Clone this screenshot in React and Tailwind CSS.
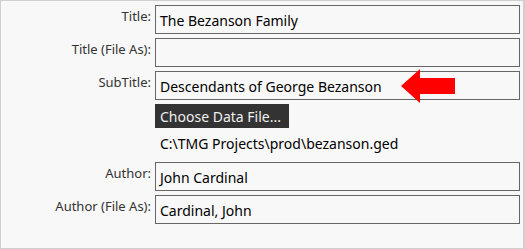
import React from "react";

const font = { fontFamily: '"Noto Sans", "Open Sans", sans-serif' };

function Row({ label, value }) {
  return (
    <div className="flex">
      <div className="w-[154px] pr-[4px] text-right text-[13px] leading-5 pt-[1px] text-[#333]">{label}</div>
      <div className="w-[365px] h-[29px] border border-[#666] bg-[#f8f8f8] flex items-center pl-[4px] pt-[1px] text-[14px] text-black whitespace-nowrap">
        {value}
      </div>
    </div>
  );
}

export default function App() {
  return (
    <div style={font} className="relative w-[525px] h-[249px] bg-[#f8f8f8] border-t border-l border-b border-r-2 border-[#cfcfcf] pt-[4px] flex flex-col gap-[4px]">
      <Row label="Title:" value="The Bezanson Family" />
      <Row label="Title (File As):" value="" />
      <Row label="SubTitle:" value="Descendants of George Bezanson" />
      <div className="flex flex-col">
        <div className="ml-[154px] w-[134px] h-[24px] bg-[#333] text-[#f0f0f0] text-[14px] flex items-center pl-[5px] whitespace-nowrap">
          Choose Data File...
        </div>
        <div className="ml-[159px] h-[30px] pt-[1px] flex items-center text-[14px] text-black whitespace-nowrap">
          C:\TMG Projects\prod\bezanson.ged
        </div>
      </div>
      <Row label="Author:" value="John Cardinal" />
      <Row label="Author (File As):" value="Cardinal, John" />
      <svg className="absolute left-[399px] top-[67px]" width="56" height="36" viewBox="0 0 56 36">
        <polygon points="1,18 20,1 20,10 55,10 55,26 20,26 20,35" fill="#ff0000" />
      </svg>
    </div>
  );
}
